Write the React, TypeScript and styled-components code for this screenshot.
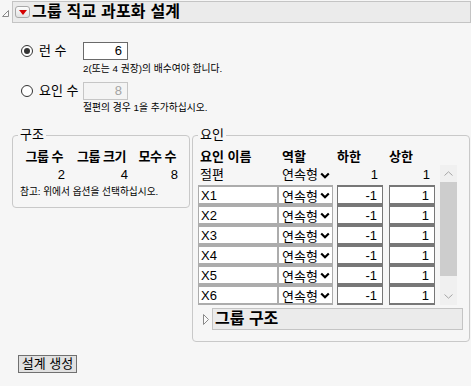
import React from "react";
import styled, { createGlobalStyle } from "styled-components";

const GlobalStyle = createGlobalStyle`
  html, body { margin: 0; padding: 0; background: #f6f6f6; }
  body {
    font-family: "Liberation Sans", "Noto Sans CJK KR", sans-serif;
    font-size: 13px;
    color: #000;
  }
  * { box-sizing: border-box; }
`;

const Page = styled.div`
  width: 471px;
  height: 386px;
  overflow: hidden;
  display: flex;
  flex-direction: column;
  background: #f6f6f6;
`;

const TitleRow = styled.div`
  display: flex;
  align-items: flex-start;
  padding: 1px 0 0 2px;
  gap: 3px;
`;

const CornerMark = styled.svg`
  flex: none;
  margin-top: 9px;
`;

const TitleBox = styled.div`
  width: 459px;
  height: 22px;
  border: 1px solid #c4c4c4;
  background: #ebebeb;
  display: flex;
  align-items: center;
  padding-left: 2px;
  gap: 2px;
`;

const MenuButton = styled.span`
  flex: none;
  width: 15px;
  height: 12px;
  border: 1px solid #a9a9a9;
  border-radius: 3px;
  background: linear-gradient(#fdfdfd, #e2e2e2);
  display: flex;
  align-items: center;
  justify-content: center;
`;

const Title = styled.span`
  font-size: 16px;
  font-weight: 700;
  line-height: 20px;
  letter-spacing: 0.2px;
  white-space: nowrap;
`;

const Options = styled.div`
  display: grid;
  grid-template-columns: 62px auto;
  margin: 19px 0 0 21px;
`;

const OptionLabel = styled.label`
  display: flex;
  align-items: center;
  gap: 6px;
  height: 18px;
  line-height: 16px;
  white-space: nowrap;
`;

const Radio = styled.span<{ $on?: boolean }>`
  flex: none;
  width: 12px;
  height: 12px;
  border-radius: 50%;
  border: 1px solid #333;
  background: #fff;
  display: flex;
  align-items: center;
  justify-content: center;
  &::after {
    content: "";
    display: ${(p) => (p.$on ? "block" : "none")};
    width: 6px;
    height: 6px;
    border-radius: 50%;
    background: #333;
  }
`;

const NumberBox = styled.div<{ $disabled?: boolean }>`
  width: 45px;
  height: 18px;
  border: 1px solid ${(p) => (p.$disabled ? "#c6c6c6" : "#6a6a6a")};
  background: ${(p) => (p.$disabled ? "#f4f4f4" : "#fff")};
  color: ${(p) => (p.$disabled ? "#a3a3a3" : "#000")};
  text-align: right;
  padding-right: 5px;
  font-size: 13px;
  line-height: 16px;
`;

const Hint = styled.div<{ $h: number; $pt: number }>`
  grid-column: 2;
  height: ${(p) => p.$h}px;
  padding-top: ${(p) => p.$pt}px;
  font-size: 9.8px;
  line-height: 14px;
  white-space: nowrap;
`;

const Panels = styled.div`
  display: flex;
  align-items: flex-start;
  gap: 2px;
  margin: 13px 0 0 12px;
`;

const Panel = styled.fieldset<{ $w: number }>`
  width: ${(p) => p.$w}px;
  margin: 0;
  padding: 0;
  border: 1px solid #c9c9c9;
  border-radius: 4px;
  min-width: 0;
`;

const Legend = styled.legend`
  margin-left: 5px;
  padding: 0 2px;
  font-size: 13px;
  line-height: 14px;
`;

const StructGrid = styled.div`
  display: grid;
  grid-template-columns: 40px 63px 50px;
  padding: 7px 0 0 12px;
  row-gap: 2px;
  line-height: 16px;
`;

const StructHead = styled.div`
  font-weight: 700;
  text-align: right;
  padding-right: 2px;
  letter-spacing: -0.5px;
  white-space: nowrap;
`;

const StructValue = styled.div`
  text-align: right;
  font-size: 13px;
`;

const Note = styled.div`
  padding: 2px 0 8px 7px;
  font-size: 9.7px;
  line-height: 14px;
  white-space: nowrap;
`;

const FactorBody = styled.div`
  padding: 7px 0 11px 5px;
`;

const ColGrid = styled.div`
  display: grid;
  grid-template-columns: 80px 59px 52px 51px;
`;

const HeadCell = styled.div<{ $pl: number }>`
  height: 16px;
  line-height: 16px;
  font-weight: 700;
  padding-left: ${(p) => p.$pl}px;
  white-space: nowrap;
`;

const TableArea = styled.div`
  display: flex;
  align-items: stretch;
`;

const PlainCell = styled.div<{ $align: "left" | "right"; $w: number; $pl?: number }>`
  width: ${(p) => p.$w}px;
  height: 20px;
  line-height: 20px;
  padding-left: ${(p) => p.$pl ?? 0}px;
  padding-right: ${(p) => (p.$align === "right" ? 5 : 0)}px;
  font-size: 13px;
  white-space: nowrap;
  display: flex;
  align-items: center;
  justify-content: ${(p) => (p.$align === "right" ? "flex-end" : "flex-start")};
  gap: 2px;
`;

const BoxCell = styled.div<{ $kind: "text" | "num"; $w: number }>`
  width: ${(p) => p.$w}px;
  height: 20px;
  background: #fff;
  border-style: solid;
  border-width: 2px 1px;
  border-color: ${(p) => (p.$kind === "num" ? "#777" : "#acacac")};
  display: flex;
  align-items: center;
  justify-content: ${(p) => (p.$kind === "num" ? "flex-end" : "flex-start")};
  padding: ${(p) => (p.$kind === "num" ? "0 5px 0 0" : "0 0 0 2px")};
  font-size: 13px;
  white-space: nowrap;
  gap: 2px;
`;

const RoleText = styled.span`
  font-size: 13px;
  padding-left: 1px;
`;

const ScrollBar = styled.div`
  width: 17px;
  background: #f0f0f0;
  display: flex;
  flex-direction: column;
`;

const ScrollButton = styled.div`
  height: 17px;
  display: flex;
  align-items: center;
  justify-content: center;
`;

const Thumb = styled.div`
  height: 94px;
  background: #cdcdcd;
`;

const Track = styled.div`
  flex: 1;
`;

const Outline = styled.div`
  display: flex;
  align-items: center;
  gap: 3px;
  margin: 3px 0 0 5px;
`;

const OutlineBox = styled.div`
  width: 251px;
  height: 22px;
  border: 1px solid #c4c4c4;
  background: #ebebeb;
  padding-left: 2px;
  font-size: 16px;
  font-weight: 700;
  line-height: 20px;
`;

const MakeButton = styled.button`
  align-self: flex-start;
  margin: 13px 0 0 18px;
  width: 59px;
  height: 18px;
  padding: 0;
  border: 1px solid #707070;
  background: #e1e1e1;
  font-family: inherit;
  font-size: 13px;
  line-height: 16px;
  color: #000;
`;

const Chevron = () => (
  <svg width="10" height="7" viewBox="0 0 10 7">
    <path d="M1.2 1.5 L5 5.2 L8.8 1.5" fill="none" stroke="#000" strokeWidth="2.2" />
  </svg>
);

const factors = ["X1", "X2", "X3", "X4", "X5", "X6"];

export default function App() {
  return (
    <Page>
      <GlobalStyle />
      <TitleRow>
        <CornerMark width="7" height="7" viewBox="0 0 7 7">
          <path d="M6.5 0.5 L6.5 6.5 L0.5 6.5 Z" fill="#fafafa" stroke="#8a8a8a" strokeWidth="1" />
        </CornerMark>
        <TitleBox>
          <MenuButton>
            <svg width="8" height="5" viewBox="0 0 8 5">
              <path d="M0 0 L8 0 L4 5 Z" fill="#d40000" />
            </svg>
          </MenuButton>
          <Title>그룹 직교 과포화 설계</Title>
        </TitleBox>
      </TitleRow>

      <Options>
        <OptionLabel>
          <Radio $on />
          런 수
        </OptionLabel>
        <NumberBox>6</NumberBox>
        <Hint $h={22} $pt={2}>2(또는 4 권장)의 배수여야 합니다.</Hint>
        <OptionLabel>
          <Radio />
          요인 수
        </OptionLabel>
        <NumberBox $disabled>8</NumberBox>
        <Hint $h={15} $pt={1}>절편의 경우 1을 추가하십시오.</Hint>
      </Options>

      <Panels>
        <Panel $w={178}>
          <Legend>구조</Legend>
          <StructGrid>
            <StructHead>그룹 수</StructHead>
            <StructHead>그룹 크기</StructHead>
            <StructHead>모수 수</StructHead>
            <StructValue>2</StructValue>
            <StructValue>4</StructValue>
            <StructValue>8</StructValue>
          </StructGrid>
          <Note>참고: 위에서 옵션을 선택하십시오.</Note>
        </Panel>

        <Panel $w={278}>
          <Legend>요인</Legend>
          <FactorBody>
            <ColGrid>
              <HeadCell $pl={2}>요인 이름</HeadCell>
              <HeadCell $pl={4}>역할</HeadCell>
              <HeadCell $pl={0}>하한</HeadCell>
              <HeadCell $pl={0}>상한</HeadCell>
            </ColGrid>
            <TableArea>
              <ColGrid>
                <PlainCell $align="left" $w={80} $pl={2}>절편</PlainCell>
                <PlainCell $align="left" $w={55} $pl={4}>
                  연속형
                  <Chevron />
                </PlainCell>
                <PlainCell $align="right" $w={46}>1</PlainCell>
                <PlainCell $align="right" $w={46}>1</PlainCell>
                {factors.map((f) => (
                  <React.Fragment key={f}>
                    <BoxCell $kind="text" $w={80}>{f}</BoxCell>
                    <BoxCell $kind="text" $w={55}>
                      <RoleText>연속형</RoleText>
                      <Chevron />
                    </BoxCell>
                    <BoxCell $kind="num" $w={46}>-1</BoxCell>
                    <BoxCell $kind="num" $w={46}>1</BoxCell>
                  </React.Fragment>
                ))}
              </ColGrid>
              <ScrollBar>
                <ScrollButton>
                  <svg width="9" height="5" viewBox="0 0 9 5">
                    <path d="M0.5 4.5 L4.5 0.8 L8.5 4.5" fill="none" stroke="#a6a6a6" strokeWidth="1" />
                  </svg>
                </ScrollButton>
                <Thumb />
                <Track />
                <ScrollButton>
                  <svg width="9" height="5" viewBox="0 0 9 5">
                    <path d="M0.5 0.5 L4.5 4.2 L8.5 0.5" fill="none" stroke="#a6a6a6" strokeWidth="1" />
                  </svg>
                </ScrollButton>
              </ScrollBar>
            </TableArea>
            <Outline>
              <svg width="6" height="11" viewBox="0 0 6 11">
                <path d="M0.5 0.5 L5.5 5.5 L0.5 10.5 Z" fill="#fafafa" stroke="#8a8a8a" strokeWidth="1" />
              </svg>
              <OutlineBox>그룹 구조</OutlineBox>
            </Outline>
          </FactorBody>
        </Panel>
      </Panels>

      <MakeButton>설계 생성</MakeButton>
    </Page>
  );
}
